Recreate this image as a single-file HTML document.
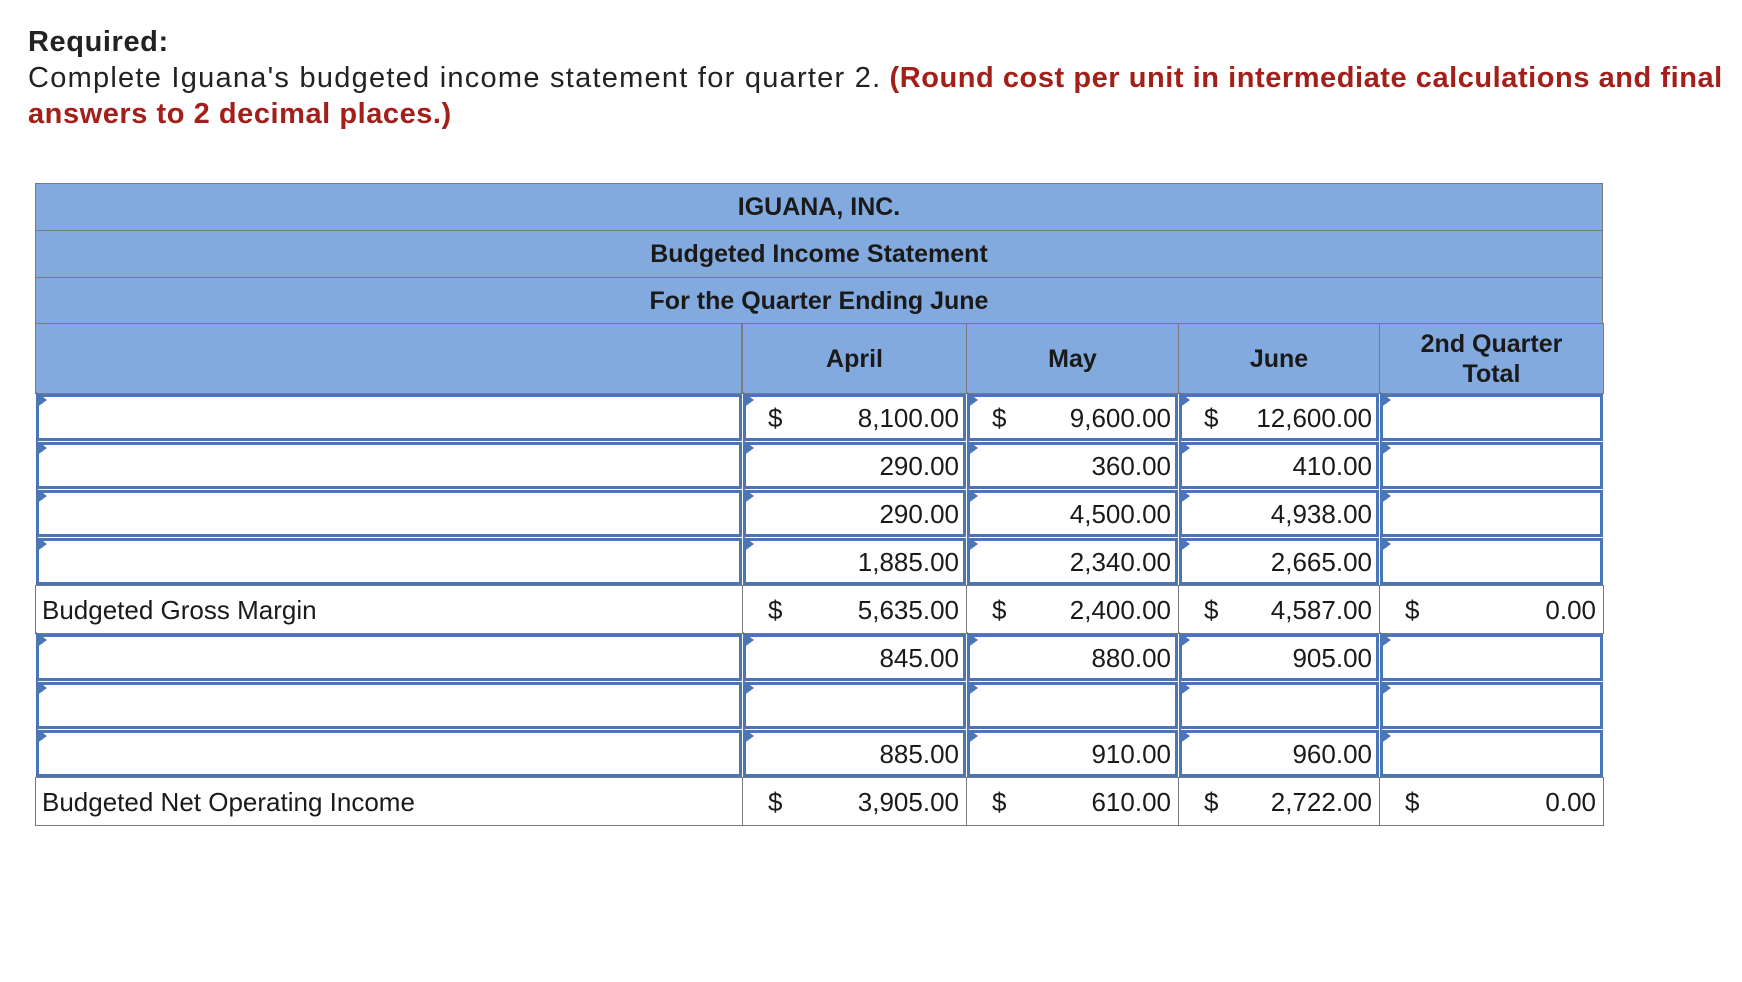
<!DOCTYPE html>
<html><head><meta charset="utf-8"><style>
body{margin:0;width:1742px;height:982px;background:#fff;position:relative;overflow:hidden;font-family:"Liberation Sans",Arial,sans-serif;color:#222}
.t{position:absolute;left:28px;top:24px;font-size:29px;line-height:36px;white-space:nowrap}
.n{letter-spacing:1.25px}
.r{color:#a3201a;font-weight:bold;letter-spacing:0.55px}
.c{position:absolute;box-sizing:border-box}
.h{background:#82aade;border:1px solid #7a7a7a;font-weight:bold;font-size:25px;display:flex;align-items:center;justify-content:center;text-align:center;line-height:30px;color:#1a1a1a}
.p{background:#fff;border:1px solid #7a7a7a}
.i{background:#fff;border:3px solid #4a75b6}
.f{position:absolute;width:0;height:0;border-top:8px solid transparent;border-bottom:8px solid transparent;border-left:11px solid #4a75b6;z-index:2}
.x{position:absolute;font-size:26px;line-height:30px;color:#1a1a1a;white-space:nowrap}
</style></head><body>
<div class="t"><b class="n" style="letter-spacing:0.6px">Required:</b><br><span class="n">Complete Iguana's budgeted income statement for quarter 2.</span> <span class="r">(Round cost per unit in intermediate calculations and final</span><br><span class="r">answers to 2 decimal places.)</span></div>
<div id="tb"></div>
<script>
var X=[35,742,966,1178,1379,1603];
var tb=document.getElementById('tb'),h='';
function box(cls,l,t,w,hh,txt){h+='<div class="c '+cls+'" style="left:'+l+'px;top:'+t+'px;width:'+w+'px;height:'+hh+'px">'+(txt||'')+'</div>';}
function tx(l,t,s,al){h+='<div class="x" style="'+(al?'right:'+(1742-l)+'px':'left:'+l+'px')+';top:'+t+'px">'+s+'</div>';}
box('h',35,183,1568,48,'IGUANA, INC.');
box('h',35,230,1568,48,'Budgeted Income Statement');
box('h',35,277,1568,47,'For the Quarter Ending June');
box('h',35,323,707,71,'');
var hd=['April','May','June','2nd Quarter<br>Total'];
for(var j=0;j<4;j++)box('h',X[j+1],323,X[j+2]-X[j+1]+1,71,hd[j]);
var rows=[
['i',['8,100.00','9,600.00','12,600.00',''],[1,1,1,0]],
['i',['290.00','360.00','410.00',''],[0,0,0,0]],
['i',['290.00','4,500.00','4,938.00',''],[0,0,0,0]],
['i',['1,885.00','2,340.00','2,665.00',''],[0,0,0,0]],
['p',['5,635.00','2,400.00','4,587.00','0.00'],[1,1,1,1],'Budgeted Gross Margin'],
['i',['845.00','880.00','905.00',''],[0,0,0,0]],
['i',['','','',''],[0,0,0,0]],
['i',['885.00','910.00','960.00',''],[0,0,0,0]],
['p',['3,905.00','610.00','2,722.00','0.00'],[1,1,1,1],'Budgeted Net Operating Income']];
for(var i=0;i<9;i++){
 var y=393+48*i,r=rows[i];
 for(var j=0;j<5;j++){
  var l=X[j],w=X[j+1]-X[j];
  if(r[0]=='i'){box('i',l+1,y+1,w-1,47);h+='<div class="f" style="left:'+(l+1)+'px;top:'+(y-1)+'px"></div>';}
  else box('p',l,y,w+1,49);
  var ty=y+10;
  if(j==0){if(r[3])tx(42,ty,r[3]);}
  else{
   if(r[2][j-1])tx(l+26,ty,'$');
   if(r[1][j-1])tx(X[j+1]-7,ty,r[1][j-1],1);
  }
 }
}
tb.innerHTML=h;
</script>
</body></html>
